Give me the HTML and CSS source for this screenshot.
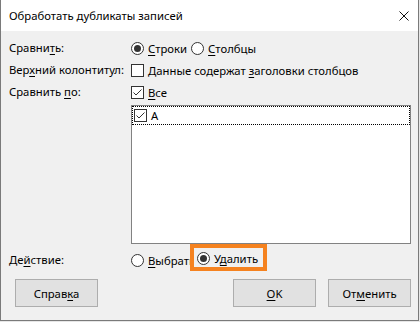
FILE: index.html
```html
<!DOCTYPE html>
<html lang="ru">
<head>
  <meta charset="UTF-8" />
  <title>Обработать дубликаты записей</title>
  <link rel="stylesheet" href="styles.css">
</head>
<body>
  <div class="dialog">
    <div class="titlebar">
      <span class="title">Обработать дубликаты записей</span>
      <svg class="close" width="10" height="10" viewBox="0 0 10 10">
        <path d="M0.5 0.5 L9.5 9.5 M9.5 0.5 L0.5 9.5" stroke="#111" stroke-width="1" fill="none"/>
      </svg>
    </div>

    <div class="content">
      <div class="form">
        <!-- Сравнить -->
        <div class="label">Сравни<u>т</u>ь:</div>
        <div class="field">
          <span class="option">
            <svg class="radio" width="13" height="13" viewBox="0 0 13 13"><circle cx="6.5" cy="6.5" r="6" fill="#fff" stroke="#333"/><circle cx="6.5" cy="6.5" r="3.5" fill="#333"/></svg>
            <span><u>С</u>троки</span>
          </span>
          <span class="option">
            <svg class="radio" width="13" height="13" viewBox="0 0 13 13"><circle cx="6.5" cy="6.5" r="6" fill="#fff" stroke="#333"/></svg>
            <span><u>С</u>толбцы</span>
          </span>
        </div>

        <!-- Верхний колонтитул -->
        <div class="label">Вер<u>х</u>ний колонтитул:</div>
        <div class="field">
          <span class="option">
            <svg class="check" width="13" height="13" viewBox="0 0 13 13"><rect x="0.5" y="0.5" width="12" height="12" fill="#fff" stroke="#333"/></svg>
            <span>Данные содержат <u>з</u>аголовки столбцов</span>
          </span>
        </div>

        <!-- Сравнить по -->
        <div class="label">Сравнить <u>п</u>о:</div>
        <div class="field">
          <span class="option">
            <svg class="check" width="13" height="13" viewBox="0 0 13 13"><rect x="0.5" y="0.5" width="12" height="12" fill="#fff" stroke="#333"/><path d="M2.5 6.5 L5 9 L10.5 3.5" stroke="#333" fill="none"/></svg>
            <span><u>В</u>се</span>
          </span>
        </div>

        <div></div>
        <div class="listbox">
          <div class="item focused">
            <svg class="check" width="13" height="13" viewBox="0 0 13 13"><rect x="0.5" y="0.5" width="12" height="12" fill="#fff" stroke="#333"/><path d="M2.5 6.5 L5 9 L10.5 3.5" stroke="#333" fill="none"/></svg>
            <span>A</span>
          </div>
        </div>

        <!-- Действие -->
        <div class="label action-label">Де<u>й</u>ствие:</div>
        <div class="field action">
          <span class="option clipped">
            <svg class="radio" width="13" height="13" viewBox="0 0 13 13"><circle cx="6.5" cy="6.5" r="6" fill="#fff" stroke="#333"/></svg>
            <span><u>В</u>ыбрать</span>
          </span>
          <span class="option highlight">
            <svg class="radio" width="13" height="13" viewBox="0 0 13 13"><circle cx="6.5" cy="6.5" r="6" fill="#fff" stroke="#333"/><circle cx="6.5" cy="6.5" r="3.5" fill="#333"/></svg>
            <span>У<u>д</u>алить</span>
          </span>
        </div>
      </div>

      <div class="buttons">
        <button class="btn">Справ<u>к</u>а</button>
        <span class="spacer"></span>
        <button class="btn"><u>O</u>K</button>
        <button class="btn">От<u>м</u>енить</button>
      </div>
    </div>
  </div>
</body>
</html>
```

FILE: styles.css
```css
body {
  margin: 0;
  background-color: #e6e6e6;
  font-family: "Noto Sans", "Open Sans", sans-serif;
  font-size: 11.3px;
  color: #000;
}

u {
  text-underline-offset: 2px;
  text-decoration-thickness: 1px;
}

.dialog {
  width: 417px;
  height: 320px;
  border: 1px solid #7a7a7a;
  border-top: none;
  background-color: #f0f0f0;
  display: flex;
  flex-direction: column;
}

.titlebar {
  height: 31px;
  background-color: #fff;
  display: flex;
  align-items: center;
  padding: 0 9px 0 8px;
  flex-shrink: 0;
}

.title {
  flex: 1;
  line-height: 1;
  margin-top: 1px;
}

.close {
  display: block;
  margin-top: 1px;
}

.content {
  padding: 6px 7px 0 8px;
  display: flex;
  flex-direction: column;
}

.form {
  display: grid;
  grid-template-columns: 122px 1fr;
  grid-auto-rows: auto;
}

.label {
  height: 22px;
  line-height: 22px;
  white-space: nowrap;
}

.field {
  height: 22px;
  display: flex;
  align-items: center;
}

.option {
  display: inline-flex;
  align-items: center;
  gap: 4px;
  margin-right: 4px;
  white-space: nowrap;
}

.option svg {
  display: block;
  flex-shrink: 0;
}

.listbox {
  margin-top: 2px;
  height: 137px;
  border: 1px solid #828282;
  background-color: #fff;
}

.item {
  height: 17px;
  display: flex;
  align-items: center;
  gap: 4px;
  padding-left: 1px;
}

.item.focused {
  border: 1px dotted #000;
}

.action-label,
.action {
  margin-top: 5px;
}

.clipped {
  width: 59px;
  overflow: hidden;
  margin-right: 0;
}

.highlight {
  position: relative;
  z-index: 1;
  border: 4px solid #f5821f;
  background-color: #f0f0f0;
  padding: 2px 5px 0 3px;
  height: 17px;
  margin-top: -6px;
  margin-right: 0;
}

.buttons {
  display: flex;
  gap: 12px;
  margin-top: 8px;
  padding-left: 6px;
}

.spacer {
  flex: 1;
}

.btn {
  width: 83px;
  height: 28px;
  background-color: #e1e1e1;
  border: 1px solid #adadad;
  border-radius: 0;
  font-family: inherit;
  font-size: 11.3px;
  color: #000;
  padding: 0;
}
```
